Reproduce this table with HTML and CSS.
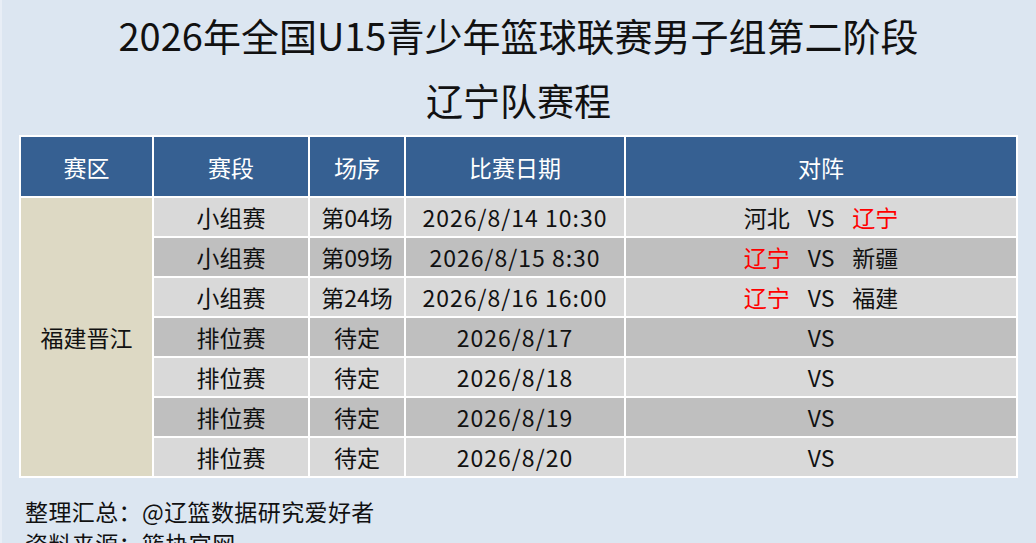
FILE: index.html
```html
<!DOCTYPE html>
<html lang="zh">
<head>
<meta charset="utf-8">
<link rel="stylesheet" href="styles.css">
</head>
<body>
<div class="page">
  <h1 class="title">2026年全国U15青少年篮球联赛男子组第二阶段</h1>
  <h2 class="subtitle">辽宁队赛程</h2>
  <table class="sched">
    <colgroup>
      <col class="c1"><col class="c2"><col class="c3"><col class="c4"><col class="c5">
    </colgroup>
    <thead>
      <tr><th>赛区</th><th>赛段</th><th>场序</th><th>比赛日期</th><th>对阵</th></tr>
    </thead>
    <tbody>
      <tr class="lt"><td class="zone" rowspan="7">福建晋江</td><td>小组赛</td><td>第04场</td><td class="date">2026/8/14 10:30</td><td class="vs">河北<span class="sep">VS</span><span class="red">辽宁</span></td></tr>
      <tr class="dk"><td>小组赛</td><td>第09场</td><td class="date">2026/8/15 8:30</td><td class="vs"><span class="red">辽宁</span><span class="sep">VS</span>新疆</td></tr>
      <tr class="lt"><td>小组赛</td><td>第24场</td><td class="date">2026/8/16 16:00</td><td class="vs"><span class="red">辽宁</span><span class="sep">VS</span>福建</td></tr>
      <tr class="dk"><td>排位赛</td><td>待定</td><td class="date">2026/8/17</td><td>VS</td></tr>
      <tr class="lt"><td>排位赛</td><td>待定</td><td class="date">2026/8/18</td><td>VS</td></tr>
      <tr class="dk"><td>排位赛</td><td>待定</td><td class="date">2026/8/19</td><td>VS</td></tr>
      <tr class="lt"><td>排位赛</td><td>待定</td><td class="date">2026/8/20</td><td>VS</td></tr>
    </tbody>
  </table>
  <p class="note first">整理汇总：@辽篮数据研究爱好者</p>
  <p class="note">资料来源：篮协官网</p>
</div>
</body>
</html>
```
FILE: styles.css
```css
html, body {
  margin: 0;
  padding: 0;
  background: #dce6f1;
}
body {
  font-family: "Noto Sans CJK SC", "Noto Sans", sans-serif;
  color: #111;
  height: 543px;
  overflow: hidden;
}
.page {
  width: 1036px;
  box-sizing: border-box;
  padding: 0 18px 0 19px;
  border-left: 2px solid #e8eef6;
}
.title {
  margin: 0 0 0 -2px;
  padding-top: 9px;
  height: 56px;
  font-size: 38px;
  font-weight: normal;
  text-align: center;
  line-height: 52px;
}
.subtitle {
  margin: 0 0 0 -2px;
  height: 70px;
  font-size: 37px;
  font-weight: normal;
  text-align: center;
  line-height: 70px;
}
.sched {
  margin-left: -2px;
  width: 997px;
  border-collapse: collapse;
  table-layout: fixed;
  font-size: 23px;
}
.c1 { width: 133px; }
.c2 { width: 156px; }
.c3 { width: 96px; }
.c4 { width: 220px; }
.c5 { width: 392px; }
.sched th, .sched td {
  border: 2px solid #ffffff;
  text-align: center;
  padding: 0;
  font-weight: normal;
}
.sched th {
  background: #366092;
  color: #ffffff;
  height: 59px;
}
.sched td {
  height: 38px;
  line-height: 38px;
}
.sched td.date { letter-spacing: 1px; }
.lt td { background: #d9d9d9; }
.dk td { background: #bfbfbf; }
.sched td.zone { background: #ddd9c4; }
.sep { margin: 0 18px; }
.red { color: #ff0000; }
.note {
  margin: 0;
  font-size: 23px;
  line-height: 32px;
  padding-left: 4px;
  letter-spacing: 0.4px;
}
.note.first { margin-top: 17px; }
```
